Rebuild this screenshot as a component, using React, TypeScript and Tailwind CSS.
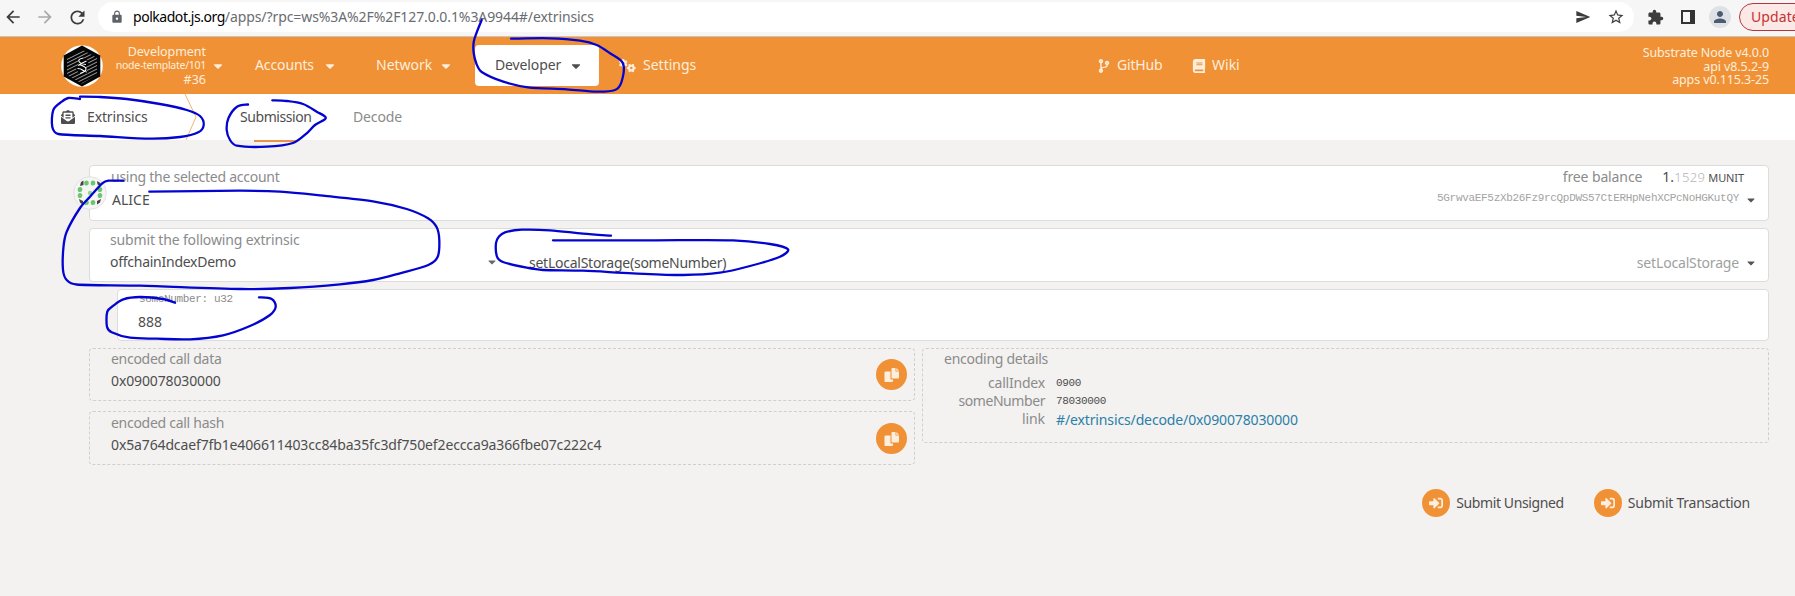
import type { ReactNode } from 'react'
import {
  MdArrowBack,
  MdArrowForward,
  MdExtension,
  MdLock,
  MdPerson,
  MdRefresh,
  MdSend,
  MdStarBorder,
} from 'react-icons/md'
import { FaBook, FaCaretDown, FaCodeBranch, FaEnvelopeOpenText, FaSignInAlt } from 'react-icons/fa'
import { FaGears } from 'react-icons/fa6'

type Point = [number, number]

/* Freehand pen strokes, in page coordinates. */
const STROKES: Point[][] = [
  [[481.7, 20], [477, 31.7], [473.7, 42], [473.7, 53], [476.5, 64], [481.7, 72], [503.3, 81.7], [528, 87.3], [566.7, 89.3], [596.7, 91.7], [615, 90], [621.5, 82], [623, 63.5], [610, 53.3], [596.7, 45], [580, 40.7], [550, 38.3], [511, 38.7]],
  [[80, 99], [68.3, 98], [61.7, 101.7], [53.3, 110], [52.3, 127], [58.3, 134], [100, 136], [150, 138.7], [180, 137], [198.3, 132.3], [203.7, 125], [200, 116], [186.7, 110], [160, 104], [126.7, 99], [100, 97], [80, 96.7]],
  [[248, 104.5], [237, 106.7], [228.5, 118], [226.7, 130], [230, 140], [236.7, 145.7], [266.7, 146.7], [293, 143], [306.7, 133.3], [315, 125], [325.8, 118], [316.7, 111.7], [303, 104], [286.7, 101], [272.3, 100.3]],
  [[123.3, 180.7], [108.3, 180.7], [102.5, 183.2], [90, 196.7], [80, 208], [66.7, 231.7], [63.5, 246.7], [63, 270], [66.7, 280], [76.7, 284.5], [140, 285.7], [240, 289], [290, 288], [340, 284.3], [373, 280], [400, 273.3], [428.3, 265], [437.7, 256.7], [439.3, 240], [436.7, 227.3], [428, 218.3], [406.7, 209], [373, 201.3], [323, 195.7], [280, 191.7], [240, 190.7], [149.3, 191.7]],
  [[611, 235.7], [583, 233.7], [550, 230.3], [521.7, 229.7], [505, 232.3], [499, 236.5], [496, 243], [497, 256.7], [503, 262], [526.7, 267.7], [543, 270], [583, 270.7], [633, 273.3], [683, 275], [720, 272.7], [750, 266], [780, 256.7], [788, 249.3], [770, 244], [733, 240.3], [650, 240.3], [553, 240.3]],
  [[175, 302.7], [163, 299], [140, 297], [123.3, 299.3], [113.3, 305.7], [107.3, 311.7], [107, 326.7], [111.7, 332.3], [130, 337.7], [156.7, 338.7], [190, 339.3], [223, 335.3], [250, 326], [270, 315], [275.7, 306.7], [271.7, 299], [259, 297.3]],
]

function smooth(p: Point[]): string {
  let d = `M${p[0][0]} ${p[0][1]}`
  for (let i = 0; i < p.length - 1; i++) {
    const a = p[i - 1] ?? p[i]
    const b = p[i]
    const c = p[i + 1]
    const e = p[i + 2] ?? c
    const len = Math.hypot(c[0] - b[0], c[1] - b[1])
    const k1 = Math.min(1 / 6, len / 3 / (Math.hypot(c[0] - a[0], c[1] - a[1]) || 1))
    const k2 = Math.min(1 / 6, len / 3 / (Math.hypot(e[0] - b[0], e[1] - b[1]) || 1))
    d += `C${b[0] + (c[0] - a[0]) * k1} ${b[1] + (c[1] - a[1]) * k1} ${c[0] - (e[0] - b[0]) * k2} ${c[1] - (e[1] - b[1]) * k2} ${c[0]} ${c[1]}`
  }
  return d
}

function PenMarks() {
  return (
    <svg className="pointer-events-none absolute left-0 top-0" width="1795" height="596" fill="none">
      {STROKES.map((s, i) => (
        <path key={i} d={smooth(s)} stroke="#0404d0" strokeWidth="2.3" strokeLinecap="round" strokeLinejoin="round" />
      ))}
    </svg>
  )
}

function BrowserBar() {
  return (
    <div className="flex h-[37px] items-center overflow-hidden border-b border-[#cfc4b8] bg-[#f6f6f6] pb-[2px] text-[#3c3c3c]">
      <MdArrowBack className="ml-[3px] size-5 shrink-0" />
      <MdArrowForward className="ml-3 size-5 shrink-0 text-[#a9a9a9]" />
      <MdRefresh className="ml-3 size-[21px] shrink-0" />
      <div className="ml-[10px] flex h-[30px] w-[1536px] shrink-0 items-center rounded-full bg-white">
        <MdLock className="ml-[12px] size-[14px] text-[#5f6368]" />
        <div className="ml-[9px] whitespace-pre leading-5 text-[#6a6d71]">
          <span className="tracking-[-0.46px] text-black">polkadot.js.org</span>
          <span className="tracking-[-0.09px]">/apps/?rpc=ws%3A%2F%2F127.0.0.1%3A9944#/extrinsics</span>
        </div>
        <MdSend className="ml-auto size-4" />
        <MdStarBorder className="ml-4 mr-[9px] size-[18px]" />
      </div>
      <MdExtension className="ml-[13px] size-[17px] shrink-0" />
      <div className="ml-[17px] h-[14px] w-[14px] shrink-0 border-2 border-r-[5px] border-[#333]" />
      <div className="ml-[14px] flex size-[22px] shrink-0 items-center justify-center rounded-full bg-[#dee1e6]">
        <MdPerson className="size-[18px] text-[#4d5b70]" />
      </div>
      <div className="ml-2 flex h-7 w-[110px] shrink-0 items-center rounded-full border border-[#b3363c] bg-[#fbe9e8] pl-[11px] tracking-[0.1px] text-[#c5322f]">
        Update
      </div>
    </div>
  )
}

function Logo() {
  return (
    <svg className="size-[42px] shrink-0" viewBox="0 0 42 42">
      <defs>
        <clipPath id="hex">
          <path d="M21 4.5 36 13v17L21 38.500 6 30V13Z" />
        </clipPath>
      </defs>
      <circle cx="21" cy="21" r="20.800" fill="#fff" />
      <path d="M21 .5 39.300 10.500v21L21 41.500 2.700 31.500v-21Z" fill="#050505" />
      <g clipPath="url(#hex)" stroke="#c9c9c9" strokeWidth=".8">
        <path d="M0 14 42-7M0 17.500 42-3.500M0 21 42 0M0 24.500 42 3.500M0 28 42 7M0 31.500 42 10.500M0 35 42 14M0 38.500 42 17.500M0 42 42 21M0 45.500 42 24.500M0 49 42 28M0 52.500 42 31.500" />
      </g>
      <path d="M16.500 13h9l2 5.500-3 3.500 2.500 6.500h-9l-3-5 3-4.500Z" fill="#050505" />
      <path
        d="M22.500 13q-6 1-4.500 3.500t7 3M25.500 16q-8 3.500-8 5M18 19.500q7 2 7 4.500t-6 4.500M16.500 23.500q3 0 5 1.500t4.500 2"
        fill="none"
        stroke="#fff"
        strokeWidth="1.100"
      />
    </svg>
  )
}

function Header() {
  return (
    <header className="flex h-[57px] items-center bg-[#f19135] text-[#fdeedd]">
      <div className="ml-[61px] flex w-[194px] shrink-0 items-center">
        <Logo />
        <div className="flex w-[103px] flex-col items-end text-[12.5px] leading-[14px]">
          <span className="tracking-[-0.05px]">Development</span>
          <span className="text-[10.5px] leading-[13px] tracking-[-0.27px]">node-template/101</span>
          <span className="leading-[15px]">#36</span>
        </div>
        <FaCaretDown className="ml-[5px] size-[14px]" />
      </div>
      <div className="flex w-[121px] shrink-0 items-center">
        <span className="pb-[2px] tracking-[-0.12px]">Accounts</span>
        <FaCaretDown className="ml-[9px] size-[14px]" />
      </div>
      <div className="flex w-[99px] shrink-0 items-center">
        <span className="pb-[2px]">Network</span>
        <FaCaretDown className="ml-[7px] size-[14px]" />
      </div>
      <div className="flex h-[41px] w-[124px] shrink-0 items-center rounded-[4px] bg-white pl-5 text-[#4e4e4e]">
        <span className="pb-[2px] tracking-[-0.13px]">Developer</span>
        <FaCaretDown className="ml-[8px] size-[14px]" />
      </div>
      <div className="ml-[20px] flex w-[478px] shrink-0 items-center">
        <FaGears className="size-[17px]" />
        <span className="ml-[7px] pb-[2px]">Settings</span>
      </div>
      <div className="flex w-[95px] shrink-0 items-center">
        <FaCodeBranch className="size-[14px]" />
        <span className="ml-[6px] pb-[2px] tracking-[-0.2px]">GitHub</span>
      </div>
      <div className="flex items-center">
        <FaBook className="size-[14px]" />
        <span className="ml-[6px] pb-[2px]">Wiki</span>
      </div>
      <div className="ml-auto mr-[26px] flex flex-col items-end pt-[2px] text-[12.5px] leading-[13.5px]">
        <span className="tracking-[-0.13px]">Substrate Node v4.0.0</span>
        <span className="tracking-[-0.09px]">api v8.5.2-9</span>
        <span className="tracking-[-0.12px]">apps v0.115.3-25</span>
      </div>
    </header>
  )
}

function TabBar() {
  return (
    <nav className="flex h-[46px] items-center bg-white text-[#4e4e4e]">
      <FaEnvelopeOpenText className="ml-[61px] size-[14px]" />
      <span className="ml-[12px] w-[97px] pb-px tracking-[-0.15px]">Extrinsics</span>
      <svg className="h-[46px] w-[14px]" viewBox="0 0 14 46" fill="none">
        <path d="M1 0 12 23 2 46" stroke="#f19135" strokeWidth="1" opacity=".7" />
      </svg>
      <div className="relative ml-[42px] flex h-full w-[113px] items-center">
        <span className="tracking-[-0.44px]">Submission</span>
        <span className="absolute -bottom-[2px] left-[14px] h-[2px] w-[43px] bg-[#e8924a]" />
      </div>
      <span className="tracking-[-0.15px] text-[#8b8b8b]">Decode</span>
    </nav>
  )
}

const GREEN_DOTS: Point[] = [[13.5, 7], [20, 7], [7, 13.5], [7, 19.5], [13.5, 26.5], [20, 26.5], [27, 13.5], [27, 19.5]]

function Identicon() {
  return (
    <svg className="absolute -left-[17px] top-[10px] size-[34px]" viewBox="0 0 34 34">
      <circle cx="17" cy="17" r="16.300" fill="#f5f5f5" stroke="#dcdcdc" strokeWidth=".8" />
      <path d="m8 6 2.500-1.500V9L7 10ZM24 5l3.500 2v3l-3-1.500ZM6 23l4 2v4l-3-2.500ZM28 23l-4 2v3.500l3-2Z" fill="#444" />
      {GREEN_DOTS.map(([x, y], i) => (
        <ellipse key={i} cx={x} cy={y} rx="2.300" ry="2.600" fill="#6bc76e" />
      ))}
      <circle cx="17" cy="17" r="2.200" fill="#8fd792" />
    </svg>
  )
}

function Label({ className = '', children }: { className?: string; children: ReactNode }) {
  return <div className={`whitespace-nowrap text-[#8b8b8b] ${className}`}>{children}</div>
}

function AccountField() {
  return (
    <section className="relative flex h-[56px] justify-between rounded-[4px] border border-[#dcdcdc] bg-white pt-[1px]">
      <Identicon />
      <div className="pl-[21px]">
        <Label className="tracking-[-0.26px]">using the selected account</Label>
        <div className="ml-[1px] mt-[3px]">ALICE</div>
      </div>
      <div className="flex flex-col items-end">
        <div className="mr-[24px] flex items-baseline">
          <span className="tracking-[-0.12px] text-[#8b8b8b]">free balance</span>
          <span className="ml-[20px] w-[12px]">1.</span>
          <span className="w-[34px] text-[13px] font-light tracking-[0.3px] text-[#b5b5b5]">1529</span>
          <span className="text-[11px] tracking-[-0.1px]">MUNIT</span>
        </div>
        <div className="mr-[11px] flex h-[20px] items-center">
          <span className="font-['Liberation_Mono',monospace] text-[11px] tracking-[-0.31px] text-[#a3a3a3]">
            5GrwvaEF5zXb26Fz9rcQpDWS57CtERHpNehXCPcNoHGKutQY
          </span>
          <FaCaretDown className="ml-[6px] mt-[3px] size-3 text-[#555]" />
        </div>
      </div>
    </section>
  )
}

function ExtrinsicField() {
  return (
    <section className="mt-[7px] flex h-[54px] rounded-[4px] border border-[#dcdcdc] bg-white pt-[1px]">
      <div className="w-[419px] pl-[20px]">
        <Label className="tracking-[-0.15px]">submit the following extrinsic</Label>
        <div className="mt-[2px] flex items-center">
          <span className="tracking-[-0.26px]">offchainIndexDemo</span>
          <FaCaretDown className="ml-auto mr-[11px] size-[12px] text-[#6a6a6a]" />
        </div>
      </div>
      <div className="flex flex-1 items-center pl-[20px] pr-[11px] pt-[14px]">
        <span className="tracking-[-0.25px]">setLocalStorage(someNumber)</span>
        <span className="ml-auto tracking-[-0.17px] text-[#a0a0a0]">setLocalStorage</span>
        <FaCaretDown className="ml-[6px] size-3 text-[#555]" />
      </div>
    </section>
  )
}

function NumberField() {
  return (
    <section className="ml-[28px] mt-[7px] h-[52px] rounded-[4px] border border-[#dcdcdc] bg-white pl-[21px]">
      <div className="font-['Liberation_Mono',monospace] text-[11px] leading-[18px] tracking-[-0.36px] text-[#8b8b8b]">
        someNumber: u32
      </div>
      <div className="-ml-px mt-[4px]">888</div>
    </section>
  )
}

function CopyGlyph() {
  return (
    <svg className="h-[16px] w-[16px]" viewBox="0 0 16 16" fill="currentColor">
      <path d="M1.500 4.500H6.500V12.500H9V14Q9 15 8 15H1.500Q.5 15 .5 14V5.500Q.5 4.500 1.500 4.500Z" />
      <path d="M8.500 1H11.500V4.500H15V10.500Q15 11.500 14 11.500H8.500Q7.500 11.500 7.500 10.500V2Q7.500 1 8.500 1Z" />
      <path d="M12.300 1 15 3.700H12.300Z" />
    </svg>
  )
}

function EncodedBox({ label, value, className }: { label: string; value: string; className: string }) {
  return (
    <section className={`flex items-center justify-between rounded-[4px] border border-dashed border-[#cfcfcf] pl-[21px] pr-[7px] ${className}`}>
      <div className="h-full">
        <Label className="tracking-[-0.28px]">{label}</Label>
        <div className="mt-[2px] tracking-[-0.13px]">{value}</div>
      </div>
      <button className="flex size-[31px] items-center justify-center rounded-full bg-[#f19135] text-[#fdeedd]">
        <CopyGlyph />
      </button>
    </section>
  )
}

function EncodingDetails() {
  return (
    <section className="h-[95px] w-[847px] rounded-[4px] border border-dashed border-[#cfcfcf] pl-[21px]">
      <Label className="tracking-[-0.26px]">encoding details</Label>
      <div className="mt-[5px] grid grid-cols-[101px_auto] gap-x-[11px] leading-[18px]">
        <span className="text-right tracking-[-0.2px] text-[#8b8b8b]">callIndex</span>
        <span className="font-['Liberation_Mono',monospace] text-[11px] leading-[18px] tracking-[-0.36px]">0900</span>
        <span className="text-right tracking-[-0.43px] text-[#8b8b8b]">someNumber</span>
        <span className="font-['Liberation_Mono',monospace] text-[11px] leading-[18px] tracking-[-0.36px]">78030000</span>
        <span className="text-right tracking-[-0.1px] text-[#8b8b8b]">link</span>
        <span className="pt-px tracking-[-0.13px] text-[#2b7fa8]">#/extrinsics/decode/0x090078030000</span>
      </div>
    </section>
  )
}

function SubmitButton({ label, className }: { label: string; className: string }) {
  return (
    <button className="flex items-center">
      <span className="flex size-[28px] items-center justify-center rounded-full bg-[#f19135] text-[#fdeedd]">
        <FaSignInAlt className="size-[14px]" />
      </span>
      <span className={`ml-[6px] ${className}`}>{label}</span>
    </button>
  )
}

export default function App() {
  return (
    <div className="relative h-[596px] w-[1795px] overflow-hidden bg-[#f3f2f1] font-['Noto_Sans',sans-serif] text-[14px] leading-5 text-[#4e4e4e]">
      <BrowserBar />
      <Header />
      <TabBar />
      <main className="pl-[89px] pr-[26px] pt-[25px]">
        <AccountField />
        <ExtrinsicField />
        <NumberField />
        <div className="mt-[7px] flex items-start justify-between">
          <div className="flex w-[826px] flex-col gap-[10px]">
            <EncodedBox label="encoded call data" value="0x090078030000" className="h-[53px]" />
            <EncodedBox
              label="encoded call hash"
              value="0x5a764dcaef7fb1e406611403cc84ba35fc3df750ef2eccca9a366fbe07c222c4"
              className="h-[54px] pt-px"
            />
          </div>
          <EncodingDetails />
        </div>
        <div className="mt-[24px] flex justify-end gap-[30px] pr-[19px]">
          <SubmitButton label="Submit Unsigned" className="tracking-[-0.38px]" />
          <SubmitButton label="Submit Transaction" className="tracking-[-0.24px]" />
        </div>
      </main>
      <PenMarks />
    </div>
  )
}
